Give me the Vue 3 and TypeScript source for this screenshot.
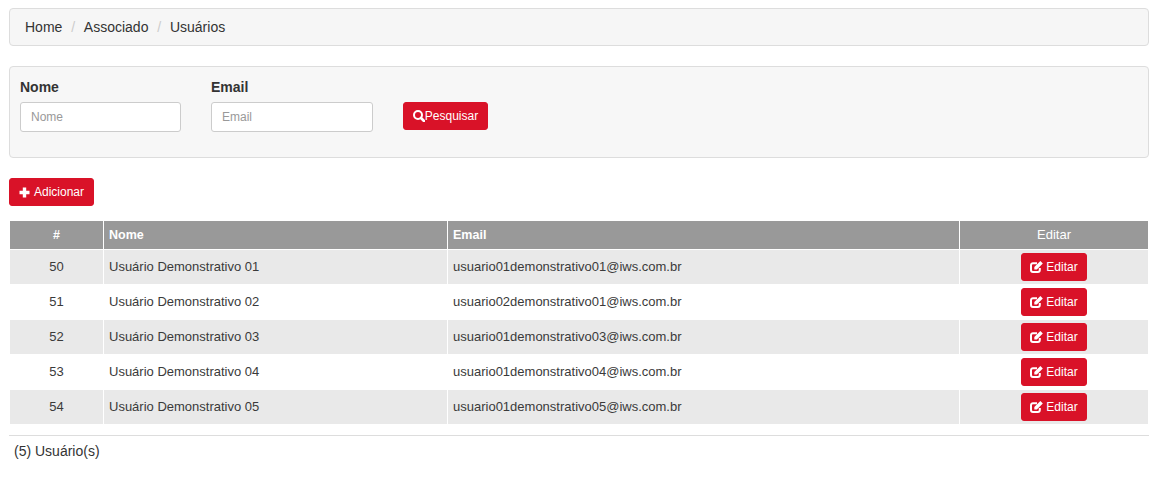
<script setup lang="ts">
const crumbs = ['Home', 'Associado', 'Usuários']
const rows = [
  { id: 50, nome: 'Usuário Demonstrativo 01', email: 'usuario01demonstrativo01@iws.com.br' },
  { id: 51, nome: 'Usuário Demonstrativo 02', email: 'usuario02demonstrativo01@iws.com.br' },
  { id: 52, nome: 'Usuário Demonstrativo 03', email: 'usuario01demonstrativo03@iws.com.br' },
  { id: 53, nome: 'Usuário Demonstrativo 04', email: 'usuario01demonstrativo04@iws.com.br' },
  { id: 54, nome: 'Usuário Demonstrativo 05', email: 'usuario01demonstrativo05@iws.com.br' },
]
</script>

<template>
  <div class="page">
    <ol class="breadcrumb">
      <li v-for="(c, i) in crumbs" :key="c">
        <span v-if="i > 0" class="sep">/</span>{{ c }}
      </li>
    </ol>

    <form class="well" @submit.prevent>
      <div class="field f1">
        <label for="nome">Nome</label>
        <input id="nome" placeholder="Nome" />
      </div>
      <div class="field f2">
        <label for="email">Email</label>
        <input id="email" placeholder="Email" />
      </div>
      <button class="btn search" type="submit">
        <svg width="12" height="12" viewBox="0 0 12 12" fill="none" stroke="#fff">
          <circle cx="5" cy="5" r="4" stroke-width="2" />
          <path d="M8 8 11 11" stroke-width="2.600" stroke-linecap="round" />
        </svg>Pesquisar
      </button>
    </form>

    <button class="btn add" type="button">
      <svg width="11" height="11" viewBox="0 0 11 11" fill="#fff">
        <path d="M3.800 0.500h3.400V3.800h3.300v3.400H7.200v3.300H3.800V7.200H0.500V3.800h3.300z" />
      </svg>
      Adicionar
    </button>

    <table>
      <colgroup>
        <col class="c1" /><col class="c2" /><col class="c3" /><col class="c4" />
      </colgroup>
      <thead>
        <tr>
          <th class="center">#</th>
          <th>Nome</th>
          <th>Email</th>
          <th class="center light">Editar</th>
        </tr>
      </thead>
      <tbody>
        <tr v-for="r in rows" :key="r.id">
          <td class="center">{{ r.id }}</td>
          <td>{{ r.nome }}</td>
          <td>{{ r.email }}</td>
          <td class="center">
            <button class="btn edit" type="button">
              <svg width="13" height="12" viewBox="0 0 13 12" fill="none">
                <path d="M9.800 7v2A2 2 0 0 1 7.800 11H3A2 2 0 0 1 1 9V4.200A2 2 0 0 1 3 2.200H7" stroke="#fff" stroke-width="2" />
                <path d="M4.300 6 4.300 8.500 6.800 8.500 12.800 2.400 10.400 0z" fill="#fff" />
              </svg>
              Editar
            </button>
          </td>
        </tr>
      </tbody>
    </table>

    <hr />
    <p class="total">(5) Usuário(s)</p>
  </div>
</template>

<style>
html, body { margin: 0; background: #fff; }
</style>

<style scoped>
.page {
  padding: 8px 14px 0 9px;
  font-family: "Liberation Sans", Arial, sans-serif;
  font-size: 14px;
  line-height: 20px;
  color: #333;
}
.breadcrumb {
  display: flex;
  margin: 0 0 20px;
  padding: 8px 15px;
  height: 20px;
  list-style: none;
  background: #f6f6f6;
  border: 1px solid #ddd;
  border-radius: 4px;
}
.sep { padding: 0 8.800px; color: #ccc; }
.well {
  display: flex;
  align-items: flex-start;
  height: 70px;
  margin: 0 0 20px;
  padding: 10px;
  background: #f7f7f7;
  border: 1px solid #ddd;
  border-radius: 4px;
}
.field { display: flex; flex-direction: column; }
.f1 { width: 161px; margin-right: 30px; }
.f2 { width: 162px; margin-right: 30px; }
label { font-weight: 700; margin-bottom: 5px; height: 20px; }
input {
  box-sizing: border-box;
  width: 100%;
  height: 30px;
  padding: 5px 10px;
  border: 1px solid #ccc;
  border-radius: 3px;
  background: #fff;
  font: 12px/18px "Liberation Sans", Arial, sans-serif;
  color: #555;
  outline: none;
}
input::placeholder { color: #999; opacity: 1; }
.btn {
  display: inline-flex;
  align-items: center;
  justify-content: center;
  box-sizing: border-box;
  height: 28px;
  padding: 0;
  border: 1px solid #d91228;
  border-radius: 3px;
  background: #d91228;
  color: #fff;
  font: 12px/18px "Liberation Sans", Arial, sans-serif;
}
.search { margin-top: 25px; width: 85px; }
.add { width: 85px; gap: 4px; display: flex; }
.edit { width: 66px; gap: 3px; vertical-align: middle; }
table {
  width: 1138px;
  margin: 15px 0 0 1px;
  border-collapse: separate;
  border-spacing: 0;
  table-layout: fixed;
  font-size: 13px;
  line-height: 18px;
  color: #3a3a3a;
}
.c1 { width: 93px; }
.c2 { width: 344px; }
.c3 { width: 512px; }
th, td { box-sizing: border-box; padding: 0 5px; }
th {
  height: 28px;
  background: #999;
  color: #fff;
  font-size: 12.500px;
  font-weight: 700;
  text-align: left;
  border-left: 1px solid #fff;
}
th.light { font-size: 13px; font-weight: 400; }
td {
  height: 35px;
  border-left: 1px solid #fff;
  border-top: 1px solid #fff;
}
th:first-child, td:first-child { border-left: 0; }
tbody tr:nth-child(odd) td { background: #e9e9e9; }
.center { text-align: center; }
hr {
  height: 1px;
  margin: 11px 0 0;
  border: 0;
  background: #ddd;
}
.total { margin: 5px 0 0 5px; }
</style>
